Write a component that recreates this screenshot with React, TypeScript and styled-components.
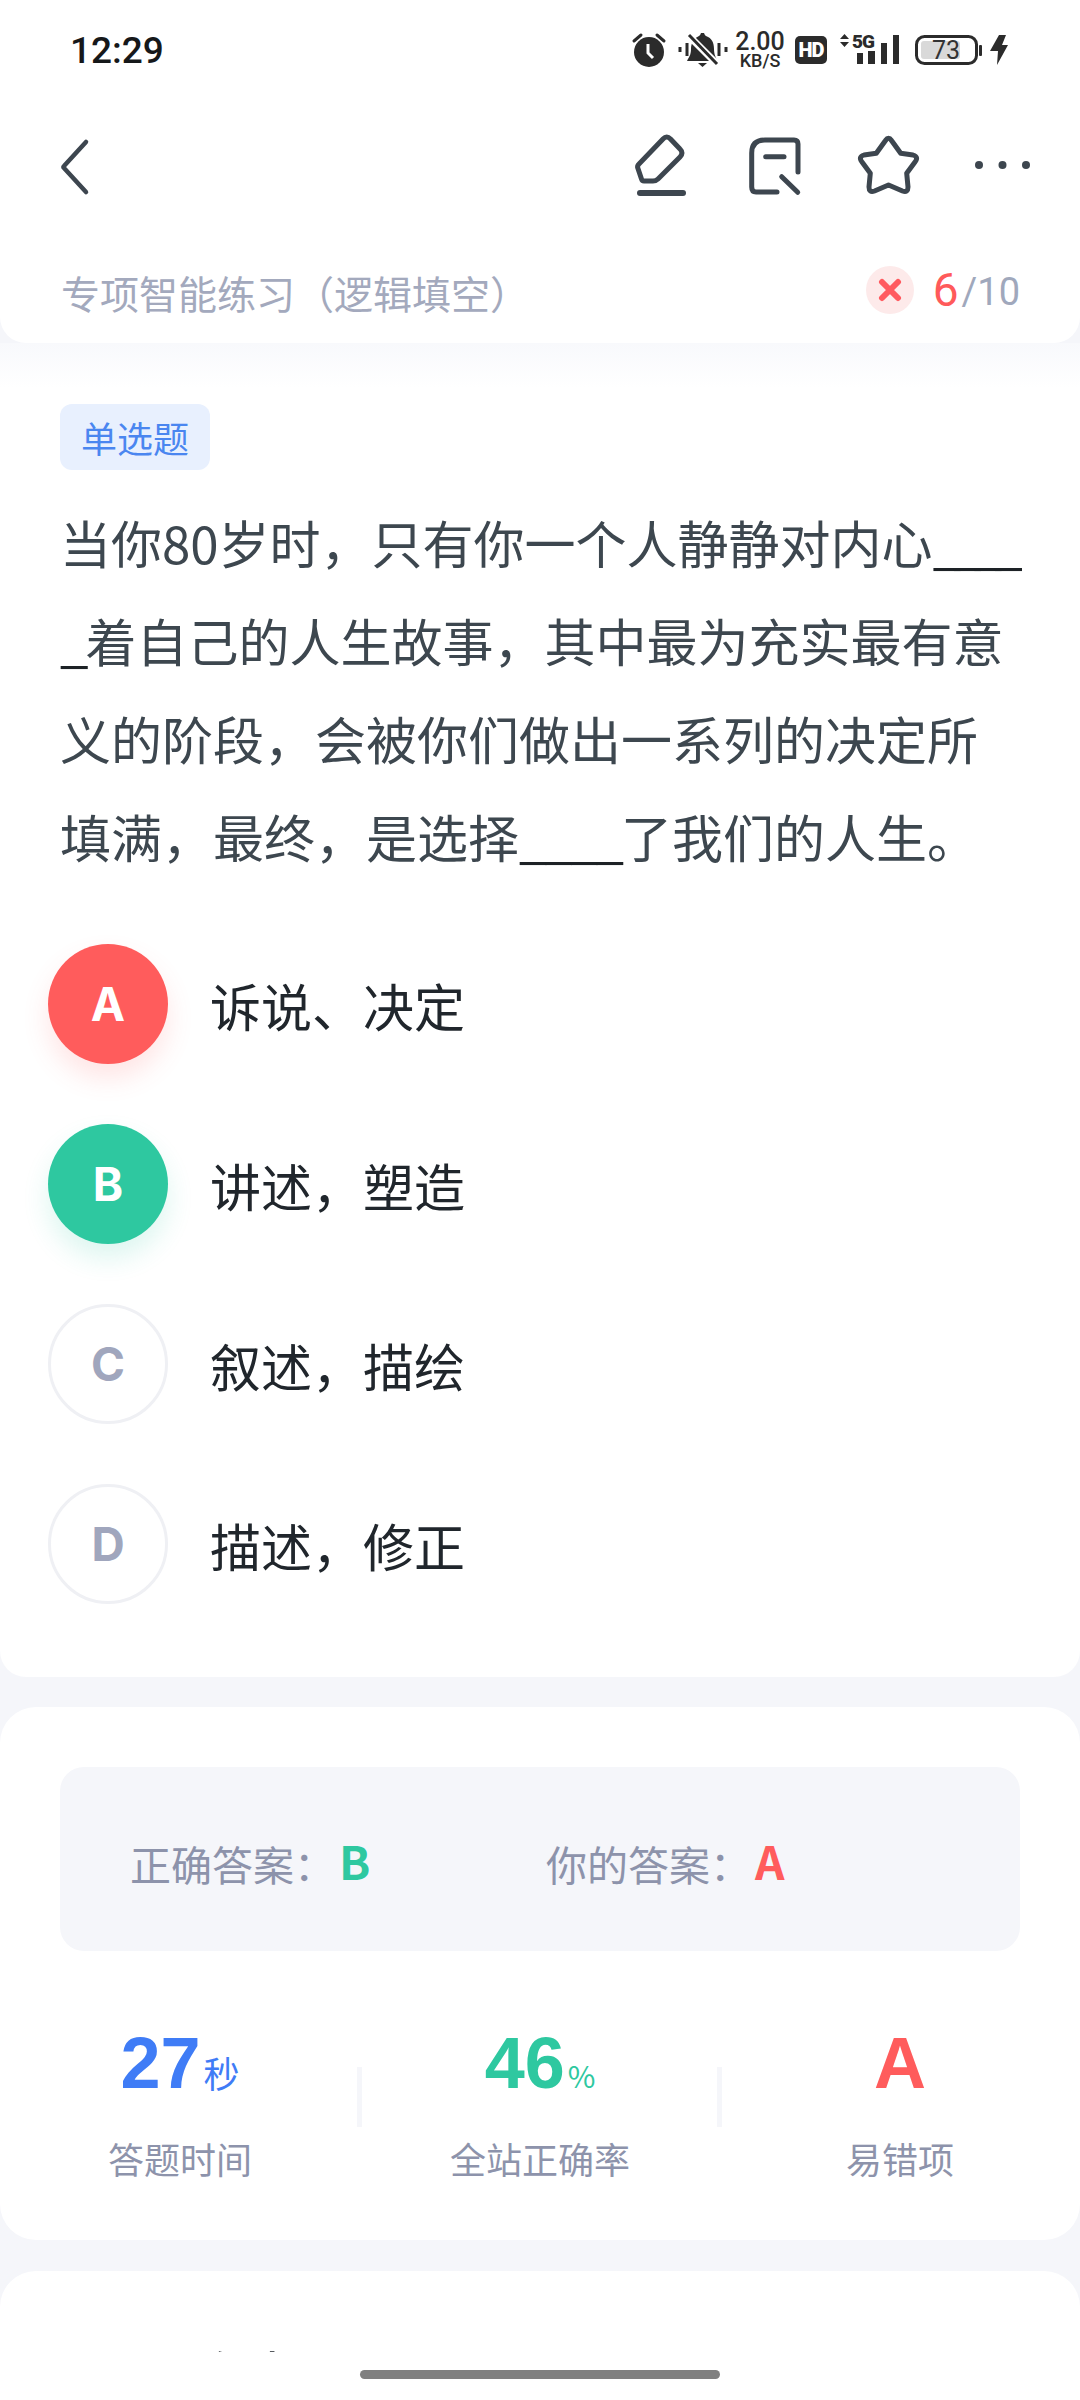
import React from "react";
import styled, { createGlobalStyle } from "styled-components";

const cjk = `"Noto Sans CJK SC", "Noto Sans", sans-serif`;
const latin = `Roboto, "Noto Sans CJK SC", sans-serif`;
const numeric = `"Liberation Sans", Arial, sans-serif`;

const Global = createGlobalStyle`
  html, body { margin: 0; padding: 0; background: #f5f6fa; }
  * { box-sizing: border-box; }
`;

const Page = styled.div`
  position: relative;
  width: 1080px;
  height: 2400px;
  overflow: hidden;
  background: #f5f6fa;
  font-family: ${cjk};
`;

const Header = styled.header`
  height: 343px;
  background: #fff;
  border-radius: 0 0 26px 26px;
`;

const StatusBar = styled.div`
  height: 100px;
  display: flex;
  align-items: center;
  justify-content: space-between;
  padding: 0 72px 0 70px;
`;

const Clock = styled.span`
  font-family: ${latin};
  font-size: 37px;
  font-weight: 500;
  color: #16181a;
`;

const StatusIcons = styled.div`
  display: flex;
  align-items: center;
  color: #2b2b2b;
`;

const StatusIcon = styled.svg<{ $gap: number }>`
  display: block;
  flex: none;
  margin-right: ${(p) => p.$gap}px;
  overflow: visible;
`;

const Speed = styled.div`
  width: 50px;
  margin-right: 10px;
  display: flex;
  flex-direction: column;
  align-items: center;
  font-family: ${latin};
  color: #2b2b2b;
`;

const SpeedValue = styled.span`
  font-size: 25px;
  line-height: 20px;
  font-weight: 500;
`;

const SpeedUnit = styled.span`
  font-size: 18px;
  line-height: 17px;
  font-weight: 500;
`;

const HdBadge = styled.span`
  width: 32px;
  height: 28px;
  margin-right: 12px;
  border-radius: 5px;
  background: #2b2b2b;
  color: #fff;
  font-family: ${latin};
  font-size: 20px;
  font-weight: 900;
  letter-spacing: -1px;
  display: flex;
  align-items: center;
  justify-content: center;
`;

const Nav = styled.nav`
  height: 130px;
  display: flex;
  align-items: center;
  justify-content: space-between;
  padding: 0 46px 0 60px;
`;

const NavActions = styled.div`
  display: flex;
  align-items: center;
  gap: 52px;
`;

const NavIcon = styled.svg<{ $stroke?: number }>`
  display: block;
  height: 70px;
  flex: none;
  overflow: visible;
  fill: none;
  stroke: #3d464f;
  stroke-width: ${(p) => p.$stroke ?? 5};
  stroke-linecap: round;
  stroke-linejoin: round;
`;

const TitleRow = styled.div`
  height: 113px;
  padding: 31px 60px 0 61px;
  display: flex;
  align-items: flex-start;
  justify-content: space-between;
`;

const Title = styled.div`
  font-size: 39px;
  line-height: 62px;
  color: #a3a9bd;
`;

const Progress = styled.div`
  display: flex;
  align-items: center;
  height: 58px;
  font-family: ${latin};
`;

const WrongMark = styled.span`
  width: 48px;
  height: 48px;
  margin-right: 19px;
  border-radius: 50%;
  background: #fdeaea;
  display: flex;
  align-items: center;
  justify-content: center;
`;

const Current = styled.span`
  font-size: 46px;
  color: #ff5a5a;
  margin-right: 3px;
`;

const Total = styled.span`
  font-size: 38px;
  color: #a0a8bc;
  padding-top: 3px;
`;

const QuestionCard = styled.section`
  height: 1334px;
  padding: 61px 60px 0;
  background: linear-gradient(#f8f9fc 0, #fff 45px);
  border-radius: 0 0 26px 26px;
`;

const TypeTag = styled.span`
  display: flex;
  align-items: center;
  justify-content: center;
  width: 150px;
  height: 66px;
  border-radius: 12px;
  background: #e8f0fe;
  color: #4a86f0;
  font-size: 36px;
`;

const Question = styled.p`
  margin: 23px 0 29px;
  font-size: 51px;
  line-height: 98px;
  color: #3d474f;
  white-space: nowrap;
`;

const Blank = styled.span<{ $spacing: number }>`
  color: #1d2226;
  letter-spacing: ${(p) => p.$spacing}px;
`;

const Option = styled.div`
  height: 180px;
  margin-left: -12px;
  display: flex;
  align-items: center;
`;

const Bubble = styled.span<{ $state: "wrong" | "right" | "idle" }>`
  width: 120px;
  height: 120px;
  margin-right: 42px;
  flex: none;
  border-radius: 50%;
  display: flex;
  align-items: center;
  justify-content: center;
  font-family: Inter, ${latin};
  font-size: 46px;
  font-weight: 700;
  color: ${(p) => (p.$state === "idle" ? "#a0a6bd" : "#fff")};
  background: ${(p) =>
    p.$state === "wrong" ? "#ff5c5c" : p.$state === "right" ? "#2ec8a0" : "#fff"};
  border: ${(p) => (p.$state === "idle" ? "3px solid #eff0f4" : "none")};
  box-shadow: ${(p) =>
    p.$state === "wrong"
      ? "0 14px 26px rgba(255, 92, 92, 0.16)"
      : p.$state === "right"
        ? "0 14px 26px rgba(46, 200, 160, 0.16)"
        : "none"};
`;

const OptionText = styled.span`
  font-size: 51px;
  line-height: 60px;
  color: #20262c;
  padding-top: 2px;
`;

const ResultCard = styled.section`
  margin-top: 30px;
  height: 533px;
  padding: 60px 60px 0;
  background: #fff;
  border-radius: 36px;
`;

const AnswerBox = styled.div`
  height: 184px;
  border-radius: 24px;
  background: #f5f6fa;
  display: flex;
  align-items: center;
  padding: 8px 0 0 70px;
`;

const AnswerItem = styled.div`
  width: 416px;
  display: flex;
  align-items: center;
  font-size: 41px;
  color: #8d93ab;
`;

const AnswerValue = styled.span<{ $color: string }>`
  font-size: 46px;
  line-height: 50px;
  font-weight: 700;
  color: ${(p) => p.$color};
  margin-top: -6px;
  margin-left: 4px;
`;

const Stats = styled.div`
  margin: 67px -60px 0;
  display: grid;
  grid-template-columns: repeat(3, 360px);
`;

const Stat = styled.div`
  position: relative;
  display: flex;
  flex-direction: column;
  align-items: center;

  &:not(:last-child)::after {
    content: "";
    position: absolute;
    right: -2px;
    top: 49px;
    width: 5px;
    height: 60px;
    background: #f5f6fa;
  }
`;

const StatValue = styled.div<{ $color: string }>`
  height: 90px;
  line-height: 90px;
  font-family: ${numeric};
  font-size: 72px;
  font-weight: 700;
  color: ${(p) => p.$color};
`;

const StatUnit = styled.span<{ $size: number }>`
  font-family: ${cjk};
  font-size: ${(p) => p.$size}px;
  font-weight: 400;
  margin-left: 3px;
`;

const StatLabel = styled.div`
  margin-top: 25px;
  font-size: 36px;
  line-height: 50px;
  color: #8d93ab;
`;

const NextCard = styled.section`
  margin-top: 31px;
  height: 200px;
  padding: 66px 60px 0;
  background: #fff;
  border-radius: 36px;
`;

const NextHeading = styled.h2`
  margin: 0;
  font-size: 50px;
  line-height: 70px;
  font-weight: 500;
  color: #20262c;
`;

const BottomBar = styled.div`
  position: absolute;
  left: 0;
  right: 0;
  bottom: 0;
  height: 48px;
  background: #fff;
  display: flex;
  justify-content: center;
  padding-top: 18px;
`;

const HomeIndicator = styled.span`
  width: 360px;
  height: 9px;
  border-radius: 5px;
  background: #808080;
`;

const options: { key: string; text: string; state: "wrong" | "right" | "idle" }[] = [
  { key: "A", text: "诉说、决定", state: "wrong" },
  { key: "B", text: "讲述，塑造", state: "right" },
  { key: "C", text: "叙述，描绘", state: "idle" },
  { key: "D", text: "描述，修正", state: "idle" },
];

export default function App() {
  return (
    <Page>
      <Global />
      <Header>
        <StatusBar>
          <Clock>12:29</Clock>
          <StatusIcons>
            <StatusIcon $gap={14} width="32" height="34" viewBox="0 0 32 34">
              <circle cx="16" cy="19" r="15" fill="#2b2b2b" />
              <path d="M1 8 L8 2 M31 8 L24 2" stroke="#2b2b2b" strokeWidth="3" strokeLinecap="round" />
              <path d="M15 11 V20 L20 25" fill="none" stroke="#fff" strokeWidth="3" />
            </StatusIcon>
            <StatusIcon $gap={8} width="48" height="34" viewBox="0 0 48 34">
              <path d="M22 0 h3 q1 3 2 3 c6 2 8 7 8 13 c0 6 2 8 3 12 H8 c2-4 4-6 4-12 c0-6 3-11 8-13 q1 0 2-3z" fill="#2b2b2b" />
              <path d="M19 30 h9 l-4.500 4z" fill="#2b2b2b" />
              <path d="M9 2 L39 32" stroke="#fff" strokeWidth="7" />
              <path d="M10 2 L38 31" stroke="#2b2b2b" strokeWidth="3" />
              <path d="M1 14 V19 M8 10 V23 M40 10 V23 M47 14 V19" stroke="#2b2b2b" strokeWidth="3" />
            </StatusIcon>
            <Speed>
              <SpeedValue>2.00</SpeedValue>
              <SpeedUnit>KB/S</SpeedUnit>
            </Speed>
            <HdBadge>HD</HdBadge>
            <StatusIcon $gap={16} width="60" height="34" viewBox="0 0 60 34">
              <path d="M1 6 L5.500 1 L10 6z M1 9 L5.500 14 L10 9z" fill="#2b2b2b" />
              <text x="13" y="15" fontFamily="Roboto" fontWeight="900" fontSize="19" letterSpacing="-1" fill="#2b2b2b">5G</text>
              <rect x="18" y="20" width="6" height="11" fill="#2b2b2b" />
              <rect x="29" y="18" width="7" height="13" fill="#2b2b2b" />
              <rect x="42" y="10" width="6" height="21" fill="#2b2b2b" />
              <rect x="54" y="2" width="6" height="29" fill="#2b2b2b" />
            </StatusIcon>
            <StatusIcon $gap={8} width="67" height="34" viewBox="0 0 67 34">
              <rect x="1.500" y="3.500" width="60" height="27" rx="8" fill="#fff" stroke="#2b2b2b" strokeWidth="3" />
              <rect x="6" y="8" width="39" height="18" rx="3" fill="#d9d9d9" />
              <rect x="64" y="12" width="3" height="11" rx="1" fill="#2b2b2b" />
              <text x="31" y="26" textAnchor="middle" fontFamily="Roboto" fontSize="25" fill="#333">73</text>
            </StatusIcon>
            <StatusIcon $gap={0} width="18" height="30" viewBox="0 0 18 30">
              <path d="M9 0 H16 L12 10 H18 L7 30 L8 16 H0z" fill="#2b2b2b" />
            </StatusIcon>
          </StatusIcons>
        </StatusBar>
        <Nav>
          <NavIcon $stroke={4.5} width="30" viewBox="0 0 30 70">
            <path d="M26 12 L4 36 Q3 37 4 38 L26 62" />
          </NavIcon>
          <NavActions>
            <NavIcon width="60" viewBox="0 0 60 70">
              <path d="M31 9 Q34.700 5 38.500 9 L48 19 Q52 23 48 27 L26 49 Q24 51 21 51 H12 Q10 51 9.500 49 L5.800 38 Q5 36 7 34 Z" />
              <path d="M8 63 H51" strokeWidth="6" />
            </NavIcon>
            <NavIcon width="62" viewBox="0 0 62 70">
              <path d="M54 42 V14 Q54 10 50 10 H21 Q7.700 10 7.700 23 V57 Q7.700 62 12 62 H33" />
              <path d="M21.700 26.700 H40" />
              <path d="M37.700 46.700 L53.700 62.300" />
            </NavIcon>
            <NavIcon width="64" viewBox="0 0 64 70">
              <g transform="translate(1 5)">
                <path d="M26.500 5.500 Q29.500 1 32.500 5.500 L41.700 18.300 L54 20 Q60 22 56 27 L47.700 38.300 L49 52 Q49 58 43.500 56 L29.500 50 L15.500 56 Q10 58 10 52 L11.300 38.300 L3 27 Q-1 22 5 20 L17.300 18.300 Z" />
              </g>
            </NavIcon>
            <NavIcon width="60" viewBox="0 0 60 70">
              <g fill="#3d464f" stroke="none">
                <circle cx="5" cy="35" r="4" />
                <circle cx="28.500" cy="35" r="4" />
                <circle cx="52" cy="35" r="4" />
              </g>
            </NavIcon>
          </NavActions>
        </Nav>
        <TitleRow>
          <Title>专项智能练习（逻辑填空）</Title>
          <Progress>
            <WrongMark>
              <svg width="24" height="24" viewBox="0 0 24 24">
                <path d="M4 4 L20 20 M20 4 L4 20" stroke="#ff5a5f" strokeWidth="6" strokeLinecap="round" />
              </svg>
            </WrongMark>
            <Current>6</Current>
            <Total>/10</Total>
          </Progress>
        </TitleRow>
      </Header>

      <QuestionCard>
        <TypeTag>单选题</TypeTag>
        <Question>
          当你80岁时，只有你一个人静静对内心<Blank $spacing={-8}>____</Blank>
          <br />
          <Blank $spacing={-3}>_</Blank>着自己的人生故事，其中最为充实最有意
          <br />
          义的阶段，会被你们做出一系列的决定所
          <br />
          填满，最终，是选择<Blank $spacing={-3}>____</Blank>了我们的人生。
        </Question>
        {options.map((o) => (
          <Option key={o.key}>
            <Bubble $state={o.state}>{o.key}</Bubble>
            <OptionText>{o.text}</OptionText>
          </Option>
        ))}
      </QuestionCard>

      <ResultCard>
        <AnswerBox>
          <AnswerItem>
            正确答案：<AnswerValue $color="#2ec8a0">B</AnswerValue>
          </AnswerItem>
          <AnswerItem>
            你的答案：<AnswerValue $color="#ff5c5c">A</AnswerValue>
          </AnswerItem>
        </AnswerBox>
        <Stats>
          <Stat>
            <StatValue $color="#3f7cf6">
              27<StatUnit $size={36}>秒</StatUnit>
            </StatValue>
            <StatLabel>答题时间</StatLabel>
          </Stat>
          <Stat>
            <StatValue $color="#2ec8a0">
              46<StatUnit $size={30}>%</StatUnit>
            </StatValue>
            <StatLabel>全站正确率</StatLabel>
          </Stat>
          <Stat>
            <StatValue $color="#ff5c5c">A</StatValue>
            <StatLabel>易错项</StatLabel>
          </Stat>
        </Stats>
      </ResultCard>

      <NextCard>
        <NextHeading>题目与解析</NextHeading>
      </NextCard>

      <BottomBar>
        <HomeIndicator />
      </BottomBar>
    </Page>
  );
}
